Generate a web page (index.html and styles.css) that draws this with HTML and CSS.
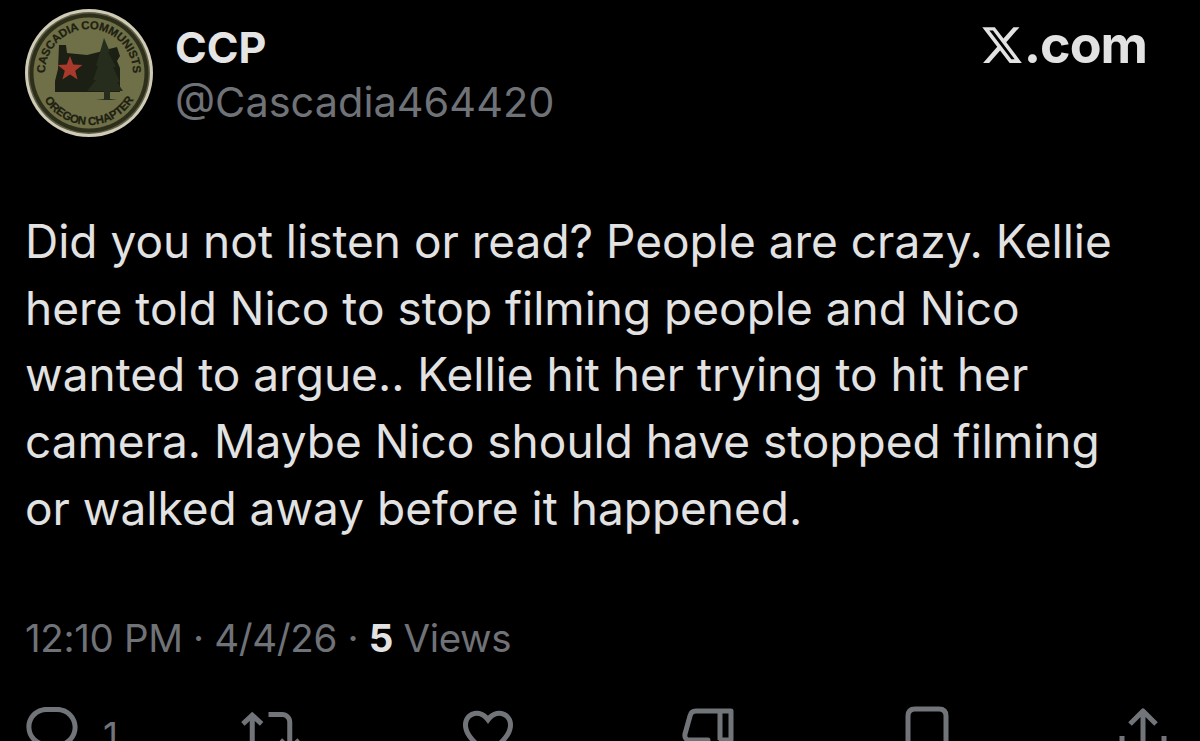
FILE: index.html
```html
<!DOCTYPE html>
<html lang="en">
<head>
<meta charset="utf-8">
<title>CCP post</title>
<link rel="stylesheet" href="styles.css">
</head>
<body>
<main class="post">
  <header class="head">
    <svg class="avatar" viewBox="0 0 128 128" aria-hidden="true">
      <defs>
        <path id="arcTop" d="M20 64 A44 44 0 1 1 108 64"/>
        <path id="arcBot" d="M12 64 A52 52 0 0 0 116 64"/>
      </defs>
      <circle cx="64" cy="64" r="64" fill="#cfcbb6"/>
      <circle cx="64" cy="64" r="61" fill="#5f6048"/>
      <circle cx="64" cy="64" r="59.500" fill="#2e2f1b"/>
      <circle cx="64" cy="64" r="55.500" fill="#6f7047"/>
      <text class="seal"><textPath href="#arcTop" startOffset="50%" text-anchor="middle">CASCADIA COMMUNISTS</textPath></text>
      <text class="seal"><textPath href="#arcBot" startOffset="50%" text-anchor="middle">OREGON CHAPTER</textPath></text>
      <path d="M34 36 L41 36 L42 44 L62 46 L78 42 L84 40 L92 38 L95 47 L92 52 L95 59 L95 83 L62 83 L30 83 L30 72 L33 60 Z" fill="#1c1f14"/>
      <path d="M79 29 L85 43 L83 43 L91 58 L88 58 L95 73 L92 73 L98 82 L85 82 L85 90 L92 91 L71 91 L79 90 L79 82 L62 82 L71 71 L68 71 L73 57 L71 57 Z" fill="#262d1c"/>
      <path d="M45 47 L48.200 55.500 L57.400 56 L50.200 61.700 L52.600 70.500 L45 65.500 L37.400 70.500 L39.800 61.700 L32.600 56 L41.800 55.500 Z" fill="#a8392b"/>
    </svg>
    <div class="names">
      <div class="name">CCP</div>
      <div class="handle">@Cascadia464420</div>
    </div>
    <div class="brand">
      <svg class="x-logo" viewBox="0 0 24 24" aria-hidden="true"><path d="M18.244 2.25h3.308l-7.227 8.26 8.502 11.24H16.17l-5.214-6.817L4.99 21.75H1.68l7.73-8.835L1.254 2.25H8.08l4.713 6.231zm-1.161 17.52h1.833L7.084 4.126H5.117z"/></svg>
      <span class="brand-text">.com</span>
    </div>
  </header>

  <p class="body-text">Did you not listen or read? People are crazy. Kellie<br>here told Nico to stop filming people and Nico<br>wanted to argue.. Kellie hit her trying to hit her<br>camera. Maybe Nico should have stopped filming<br>or walked away before it happened.</p>

  <p class="meta">12:10 PM · 4/4/26 · <strong>5</strong> Views</p>

  <div class="actions">
    <div class="action">
      <svg class="icon" viewBox="0 0 24 24"><path d="M1.751 10c0-4.42 3.584-8 8.005-8h4.366c4.49 0 8.129 3.64 8.129 8.13 0 2.96-1.607 5.68-4.196 7.11l-8.054 4.46v-3.69h-.067c-4.49.1-8.183-3.51-8.183-8.01zm8.005-6c-3.317 0-6.005 2.69-6.005 6 0 3.37 2.77 6.08 6.138 6.01l.351-.01h1.761v2.3l5.087-2.81c1.951-1.08 3.163-3.13 3.163-5.36 0-3.39-2.744-6.13-6.129-6.13H9.756z"/></svg>
      <span class="count">1</span>
    </div>
    <div class="action">
      <svg class="icon" viewBox="0 0 24 24"><path d="M4.5 3.88l4.432 4.14-1.364 1.46L5.5 7.55V16c0 1.1.896 2 2 2H13v2H7.5c-2.209 0-4-1.79-4-4V7.55L1.432 9.48.068 8.02 4.5 3.88zM16.5 6H11V4h5.5c2.209 0 4 1.79 4 4v8.45l2.068-1.93 1.364 1.46-4.432 4.14-4.432-4.14 1.364-1.46 2.068 1.93V8c0-1.1-.896-2-2-2z"/></svg>
    </div>
    <div class="action">
      <svg class="icon" viewBox="0 0 24 24"><path d="M16.697 5.5c-1.222-.06-2.679.51-3.89 2.16l-.805 1.09-.806-1.09C9.984 6.01 8.526 5.44 7.304 5.5c-1.243.07-2.349.78-2.91 1.91-.552 1.12-.633 2.78.479 4.82 1.074 1.97 3.257 4.27 7.129 6.61 3.87-2.34 6.052-4.64 7.126-6.61 1.111-2.04 1.03-3.7.477-4.82-.561-1.13-1.666-1.84-2.908-1.91zm4.187 7.69c-1.351 2.48-4.001 5.12-8.379 7.67l-.503.3-.504-.3c-4.379-2.55-7.029-5.19-8.382-7.67-1.36-2.5-1.41-4.86-.514-6.67.887-1.79 2.647-2.91 4.601-3.01 1.651-.09 3.368.56 4.798 2.01 1.429-1.45 3.146-2.1 4.796-2.01 1.954.1 3.714 1.22 4.601 3.01.896 1.81.846 4.17-.514 6.67z"/></svg>
    </div>
    <div class="action">
      <svg class="icon line" viewBox="0 0 60 60"><path d="M55 9 H20 Q15 9 14 14 L9 32 Q8 38 14 38 H32 L30 50 Q32 56 38 50 L46 38 H55 Z M44 9 V38"/></svg>
    </div>
    <div class="action">
      <svg class="icon line" viewBox="0 0 60 60"><path d="M11 60 V14 Q11 7 18 7 H42 Q49 7 49 14 V60 M11 60 L30 46 L49 60"/></svg>
    </div>
    <div class="action">
      <svg class="icon line" viewBox="0 0 60 60"><path d="M30 9 V45 M17 22 L30 9 L43 22 M9 34 V50 Q9 55 14 55 H46 Q51 55 51 50 V34"/></svg>
    </div>
  </div>
</main>
</body>
</html>
```
FILE: styles.css
```css
html, body {
  margin: 0;
  height: 100%;
  background: #000;
  overflow: hidden;
}
.post {
  width: 1200px;
  height: 741px;
  box-sizing: border-box;
  padding: 9px 53px 0 25px;
  overflow: hidden;
  font-family: Inter, "Liberation Sans", sans-serif;
  color: #e2e2e2;
}
.head {
  display: flex;
  align-items: flex-start;
  height: 128px;
}
.avatar {
  width: 128px;
  height: 128px;
  flex: none;
}
.seal {
  font: 700 11.500px "Liberation Sans Narrow", "Liberation Sans", sans-serif;
  fill: #1e2012;
  stroke: #1e2012;
  stroke-width: 0.25px;
  letter-spacing: -0.2px;
}
.names {
  margin-left: 22px;
  flex: 1;
}
.name {
  font-size: 43px;
  font-weight: 700;
  line-height: 50px;
  margin-top: 13px;
  color: #e4e4e4;
}
.handle {
  font-size: 41.500px;
  font-weight: 400;
  line-height: 60px;
  color: #6f7277;
}
.brand {
  display: flex;
  align-items: center;
  margin-top: 6px;
}
.x-logo {
  width: 44px;
  height: 44px;
  fill: #e2e2e2;
}
.brand-text {
  font-size: 52px;
  font-weight: 700;
  line-height: 60px;
  letter-spacing: -1px;
}
.body-text {
  margin: 71px 0 0 0;
  width: 1150px;
  font-size: 46px;
  line-height: 66.700px;
  color: #e2e2e2;
}
.meta {
  margin: 73px 0 0 0;
  font-size: 38.500px;
  line-height: 46px;
  letter-spacing: -0.35px;
  color: #6f7277;
}
.meta strong {
  font-weight: 700;
  color: #e2e2e2;
}
.actions {
  display: grid;
  grid-template-columns: 219px 217px 218px 221px 216px 60px;
  margin: 41px 0 0 -3px;
}
.action {
  display: flex;
  align-items: flex-start;
}
.icon {
  width: 60px;
  height: 60px;
  flex: none;
  fill: #717478;
}
.icon.line {
  fill: none;
  stroke: #717478;
  stroke-width: 5;
  stroke-linejoin: round;
}
.count {
  margin: 11px 0 0 21px;
  font-size: 37px;
  line-height: 46px;
  color: #717478;
}
```
